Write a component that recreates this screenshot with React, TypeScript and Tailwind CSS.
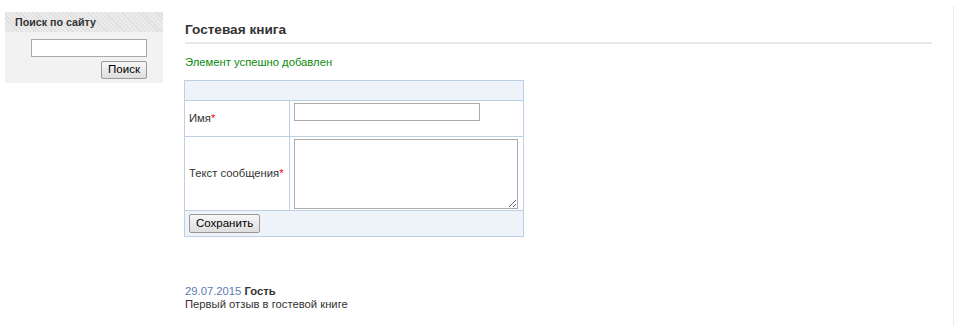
import React from 'react';

const App: React.FC = () => {
  return (
    <div className="w-[965px] h-[330px] bg-white font-['Liberation_Sans',Arial,sans-serif] text-[11.25px] text-[#333] pt-[6px]">
      <div className="w-[954px] h-[320px] border-r border-[#ececec] flex items-start pl-[5px] pt-[6px]">
        {/* Sidebar search */}
        <div className="w-[158px] bg-[#f2f2f2] pb-[4px]">
          <div className="h-[20px] pl-[10px] flex items-center font-bold text-[10.7px] text-[#333] bg-[repeating-linear-gradient(45deg,#dedede_0px,#dedede_1px,#ebebeb_1px,#ebebeb_3px)]">
            Поиск по сайту
          </div>
          <div className="flex flex-col items-end pr-[16px] pt-[7px] gap-[4px]">
            <input type="text" className="w-[116px] h-[18px] bg-white border border-[#aaa] outline-none" />
            <button className="w-[46px] h-[18px] text-[11.5px] text-black bg-[linear-gradient(#f6f6f6,#dedede)] border border-[#999] rounded-[2px] leading-none">
              Поиск
            </button>
          </div>
        </div>

        {/* Main content */}
        <div className="ml-[22px] w-[747px]">
          <h1 className="pt-[10px] pb-[4px] text-[13.6px] font-bold text-[#333] border-b-2 border-[#e8e8e8] leading-[16px]">
            Гостевая книга
          </h1>
          <div className="mt-[11px] text-[#0a8a0a] leading-[14px]">Элемент успешно добавлен</div>

          <table className="mt-[11px] -ml-px w-[340px] border-collapse">
            <tbody>
              <tr>
                <td colSpan={2} className="h-[20px] bg-[#eef3fa] border border-[#bccfe4]"></td>
              </tr>
              <tr>
                <td className="w-[105px] h-[36px] border border-[#bccfe4] pl-[4px] align-middle whitespace-nowrap">
                  Имя<span className="text-[#e00]">*</span>
                </td>
                <td className="border border-[#bccfe4] align-top pl-[4px] pt-[2px]">
                  <input type="text" className="block w-[186px] h-[18px] border border-[#aaa] outline-none" />
                </td>
              </tr>
              <tr>
                <td className="h-[74px] border border-[#bccfe4] pl-[4px] align-middle whitespace-nowrap">
                  Текст сообщения<span className="text-[#e00]">*</span>
                </td>
                <td className="border border-[#bccfe4] align-top pl-[4px] pt-[2px]">
                  <textarea className="block w-[224px] h-[70px] border border-[#aaa] outline-none resize" />
                </td>
              </tr>
              <tr>
                <td colSpan={2} className="h-[26px] bg-[#eef3fa] border border-[#bccfe4] pl-[4px]">
                  <button className="block h-[19px] px-[6px] text-[11.5px] text-black bg-[linear-gradient(#f6f6f6,#dedede)] border border-[#999] rounded-[2px] leading-none">
                    Сохранить
                  </button>
                </td>
              </tr>
            </tbody>
          </table>

          <div className="mt-[48px] leading-[13px]">
            <div>
              <span className="text-[#5b7bb4]">29.07.2015</span> <span className="font-bold">Гость</span>
            </div>
            <div>Первый отзыв в гостевой книге</div>
          </div>
        </div>
      </div>
    </div>
  );
};

export default App;
